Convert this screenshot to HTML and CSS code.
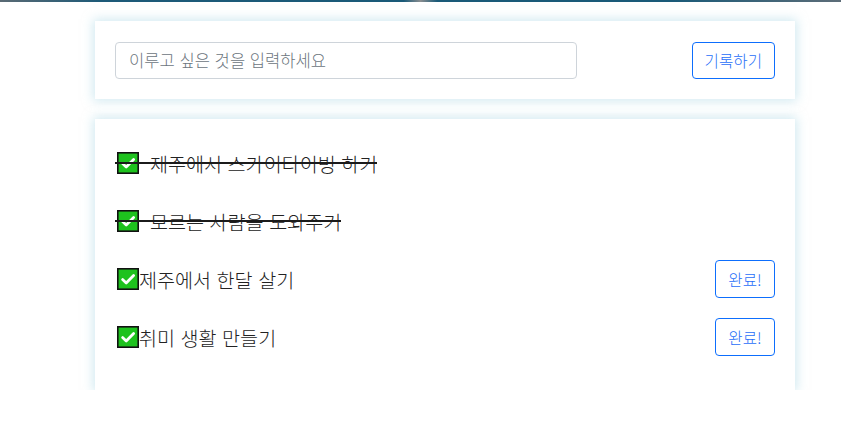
FILE: index.html
```html
<!DOCTYPE html>
<html lang="ko">
<head>
    <meta charset="UTF-8">
    <meta name="viewport" content="width=device-width, initial-scale=1.0">
    <title>버킷리스트</title>
    <link rel="stylesheet" href="styles.css">
</head>
<body>
    <div class="top-line"></div>
    <div class="wrap">
        <div class="card input-card">
            <input type="text" class="bucket-input" placeholder="이루고 싶은 것을 입력하세요">
            <button class="btn">기록하기</button>
        </div>

        <div class="card list-card">
            <div class="item">
                <span class="item-text done">
                    <svg class="check" viewBox="0 0 22 22"><rect x="0.8" y="0.8" width="20.4" height="20.4" fill="#1ec21e" stroke="#111" stroke-width="1.6"/><path d="M5.6 11.6l3.6 3.4L16.6 7.6" fill="none" stroke="#fff" stroke-width="2.8" stroke-linecap="round" stroke-linejoin="round"/></svg>
                    제주에서 스카이다이빙 하기
                </span>
            </div>
            <div class="item">
                <span class="item-text done">
                    <svg class="check" viewBox="0 0 22 22"><rect x="0.8" y="0.8" width="20.4" height="20.4" fill="#1ec21e" stroke="#111" stroke-width="1.6"/><path d="M5.6 11.6l3.6 3.4L16.6 7.6" fill="none" stroke="#fff" stroke-width="2.8" stroke-linecap="round" stroke-linejoin="round"/></svg>
                    모르는 사람을 도와주기
                </span>
            </div>
            <div class="item">
                <span class="item-text">
                    <svg class="check" viewBox="0 0 22 22"><rect x="0.8" y="0.8" width="20.4" height="20.4" fill="#1ec21e" stroke="#111" stroke-width="1.6"/><path d="M5.6 11.6l3.6 3.4L16.6 7.6" fill="none" stroke="#fff" stroke-width="2.8" stroke-linecap="round" stroke-linejoin="round"/></svg>제주에서 한달 살기
                </span>
                <button class="btn">완료!</button>
            </div>
            <div class="item">
                <span class="item-text">
                    <svg class="check" viewBox="0 0 22 22"><rect x="0.8" y="0.8" width="20.4" height="20.4" fill="#1ec21e" stroke="#111" stroke-width="1.6"/><path d="M5.6 11.6l3.6 3.4L16.6 7.6" fill="none" stroke="#fff" stroke-width="2.8" stroke-linecap="round" stroke-linejoin="round"/></svg>취미 생활 만들기
                </span>
                <button class="btn">완료!</button>
            </div>
        </div>
    </div>
</body>
</html>
```

FILE: styles.css
```css
* {
    box-sizing: border-box;
}
body {
    margin: 0;
    font-family: "Noto Sans CJK KR", "Noto Sans", sans-serif;
    color: #212529;
    background-color: #fff;
}
.top-line {
    height: 2px;
    background: linear-gradient(90deg, #5a6a74 0%, #1d5a78 12%, #1a5a78 48%, #8a8e90 50%, #1a5a78 52%, #1a5a78 80%, #5d6d78 100%);
}
.wrap {
    width: 700px;
    margin: 19px 0 0 95px;
}
.card {
    background-color: #fff;
    box-shadow: 0 0 10px 2px rgba(173, 216, 230, 0.55);
}
.input-card {
    display: flex;
    justify-content: space-between;
    align-items: center;
    padding: 20px;
    height: 78px;
}
.bucket-input {
    width: 462px;
    height: 37px;
    padding: 0 13px;
    border: 1px solid #ced4da;
    border-radius: 4px;
    font-family: inherit;
    font-size: 16.6px;
    font-weight: 300;
    color: #212529;
}
.bucket-input::placeholder {
    color: #6c757d;
}
.btn {
    height: 37px;
    padding: 0 12px;
    border: 1px solid #0d6efd;
    border-radius: 4px;
    background-color: #fff;
    color: #1f6ef8;
    font-family: inherit;
    font-size: 15.6px;
    font-weight: 300;
    cursor: pointer;
}
.list-card {
    margin-top: 20px;
    padding: 25px 20px 34px 20px;
    display: flex;
    flex-direction: column;
    gap: 20px;
}
.item {
    height: 38px;
    display: flex;
    justify-content: space-between;
    align-items: center;
}
.item .btn {
    height: 38px;
    width: 60px;
    padding: 0;
}
.item-text {
    position: relative;
    display: flex;
    align-items: center;
    font-size: 19.6px;
    font-weight: 300;
    color: #222;
}
.check {
    width: 22px;
    height: 22px;
    margin-left: 2px;
}
.done .check {
    margin-right: 11px;
}
.done::after {
    content: "";
    position: absolute;
    left: 0;
    right: 0;
    top: 50%;
    height: 2px;
    margin-top: -1px;
    background-color: #1b1b1b;
}
```
